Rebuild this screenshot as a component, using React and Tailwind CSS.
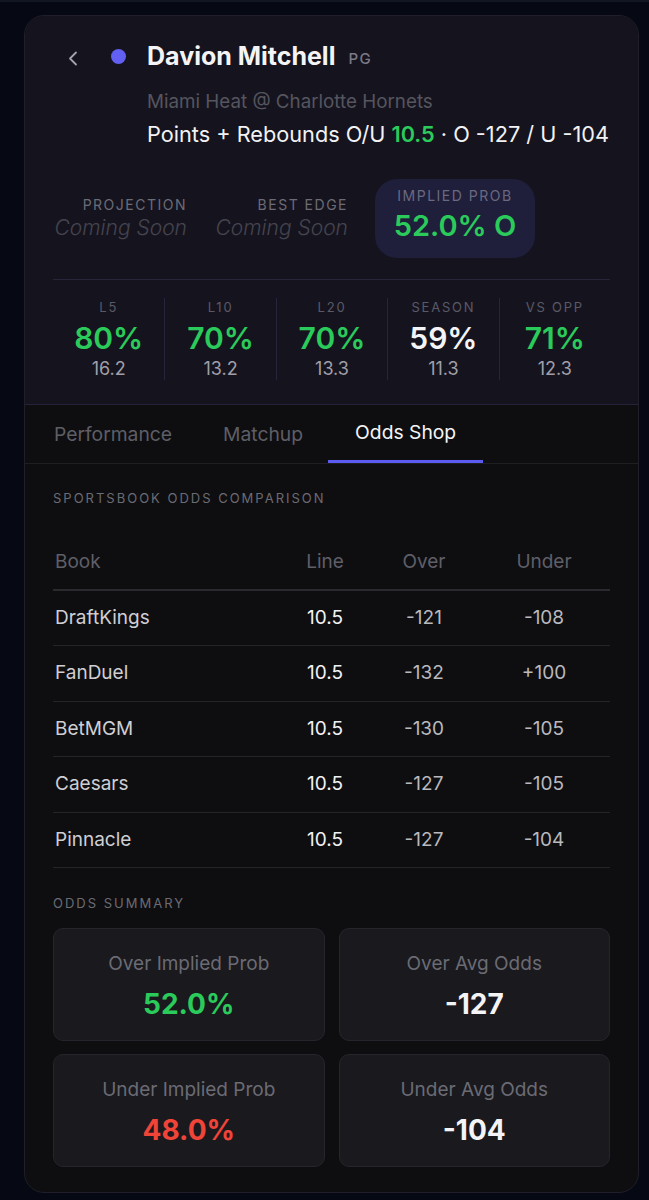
import React from "react";

const F = { fontFamily: "Inter, 'Noto Sans', sans-serif" };

const stats = [
  { l: "L5", p: "80%", v: "16.2", g: true },
  { l: "L10", p: "70%", v: "13.2", g: true },
  { l: "L20", p: "70%", v: "13.3", g: true },
  { l: "SEASON", p: "59%", v: "11.3", g: false },
  { l: "VS OPP", p: "71%", v: "12.3", g: true },
];

const rows = [
  ["DraftKings", "10.5", "-121", "-108"],
  ["FanDuel", "10.5", "-132", "+100"],
  ["BetMGM", "10.5", "-130", "-105"],
  ["Caesars", "10.5", "-127", "-105"],
  ["Pinnacle", "10.5", "-127", "-104"],
];

function SummaryCard({ label, value, color }) {
  return (
    <div className="h-[113px] rounded-[10px] border border-[#25252b] bg-[#19191e] flex flex-col items-center pt-[22px]">
      <div className="text-[19px] leading-[26px] text-[#6b6b74]">{label}</div>
      <div className={`mt-[10px] text-[28px] leading-[34px] font-bold ${color}`}>{value}</div>
    </div>
  );
}

export default function App() {
  return (
    <div className="min-h-screen bg-[#060913] border-t-2 border-[#121622] pt-[13px] pl-[24px]" style={F}>
      <div className="w-[615px] h-[1178px] rounded-[20px] border border-[#1f1e29] overflow-hidden bg-[#0e0e11]">
        {/* Header */}
        <div className="bg-[#15141e] px-[28px] pt-[25px] pb-[24px] border-b border-[#24233a]">
          <div className="flex items-center h-[30px]">
            <svg width="10" height="15" viewBox="0 0 10 15" className="ml-[15px] mt-[4px]">
              <polyline points="8,1.5 2,7.5 8,13.5" fill="none" stroke="#a4a3ad" strokeWidth="1.8" strokeLinecap="round" strokeLinejoin="round" />
            </svg>
            <div className="ml-[33px] w-[15px] h-[15px] rounded-full bg-[#6160f2]" />
            <div className="ml-[21px] text-[25px] leading-[30px] font-bold text-[#f4f4f6]">Davion Mitchell</div>
            <div className="ml-[13px] mt-[6px] text-[15px] font-medium tracking-[1.5px] text-[#7a7986]">PG</div>
          </div>
          <div className="ml-[94px] mt-[19px] text-[18.8px] leading-[24px] text-[#56555f]">Miami Heat @ Charlotte Hornets</div>
          <div className="ml-[94px] mt-[7px] text-[21.7px] leading-[26px] text-[#f2f2f5]">
            Points + Rebounds O/U <span className="text-[#2bcb5b] font-semibold">10.5</span> · O -127 / U -104
          </div>

          <div className="mt-[32px] flex items-center gap-[27px]">
            <div className="w-[134px] text-right">
              <div className="text-[14px] leading-[18px] tracking-[1.5px] text-[#6c6b78]">PROJECTION</div>
              <div className="text-[21px] leading-[28px] font-light italic text-[#45444f]">Coming Soon</div>
            </div>
            <div className="w-[134px] text-right">
              <div className="text-[14px] leading-[18px] tracking-[1.5px] text-[#6c6b78]">BEST EDGE</div>
              <div className="text-[21px] leading-[28px] font-light italic text-[#45444f]">Coming Soon</div>
            </div>
            <div className="w-[160px] h-[79px] rounded-[22px] bg-[#1f1e3b] flex flex-col items-center pt-[7px]">
              <div className="text-[14px] leading-[20px] tracking-[1.5px] text-[#6a6980]">IMPLIED PROB</div>
              <div className="mt-[3px] text-[29px] leading-[34px] font-semibold text-[#2bcb5b]">52.0% O</div>
            </div>
          </div>

          <div className="mt-[21px] h-px bg-[#26253a]" />

          <div className="mt-[18px] grid grid-cols-5">
            {stats.map((s, i) => (
              <div key={s.l} className={`flex flex-col items-center ${i > 0 ? "border-l border-[#26253a]" : ""}`}>
                <div className="text-[13px] leading-[18px] tracking-[1.8px] text-[#5a5967]">{s.l}</div>
                <div className={`mt-[5px] text-[30px] leading-[34px] font-semibold ${s.g ? "text-[#2bcb5b]" : "text-[#f4f4f6]"}`}>{s.p}</div>
                <div className="mt-[3px] text-[18px] leading-[22px] text-[#a09fa8]">{s.v}</div>
              </div>
            ))}
          </div>
        </div>

        {/* Tabs */}
        <div className="flex h-[59px] border-b border-[#1e1e23] pl-[3px]">
          <div className="px-[26px] flex items-center text-[19.3px] text-[#5e5e66]">Performance</div>
          <div className="px-[25px] flex items-center text-[19.3px] text-[#5e5e66]">Matchup</div>
          <div className="flex flex-col text-[19.3px] text-[#f5f5f7]">
            <div className="flex-1 flex items-center px-[27px]">Odds Shop</div>
            <div className="h-[3px] bg-[#5b5bf0]" />
          </div>
        </div>

        {/* Content */}
        <div className="px-[28px] pt-[26px]">
          <div className="text-[13px] leading-[16px] tracking-[2px] text-[#6b6b73]">SPORTSBOOK ODDS COMPARISON</div>

          <div className="mt-[29px]">
            <div className="grid grid-cols-[232px_80px_118px_122px] h-[56px] items-center border-b-2 border-[#2a2a2f] text-[19px] text-[#5f5f68]">
              <div className="pl-[2px]">Book</div>
              <div className="text-center">Line</div>
              <div className="text-center">Over</div>
              <div className="text-center">Under</div>
            </div>
            {rows.map((r) => (
              <div key={r[0]} className="grid grid-cols-[232px_80px_118px_122px] h-[55.4px] items-center border-b border-[#242428] text-[19px]">
                <div className="pl-[2px] text-[#cfcfd3]">{r[0]}</div>
                <div className="text-center text-[#f2f2f4]">{r[1]}</div>
                <div className="text-center text-[#b9b9be]">{r[2]}</div>
                <div className="text-center text-[#b9b9be]">{r[3]}</div>
              </div>
            ))}
          </div>

          <div className="mt-[27px] text-[13px] leading-[16px] tracking-[2px] text-[#6b6b73]">ODDS SUMMARY</div>
          <div className="mt-[17px] grid grid-cols-2 gap-x-[14px] gap-y-[13px]">
            <SummaryCard label="Over Implied Prob" value="52.0%" color="text-[#2bcb5b]" />
            <SummaryCard label="Over Avg Odds" value="-127" color="text-[#f4f4f6]" />
            <SummaryCard label="Under Implied Prob" value="48.0%" color="text-[#f04438]" />
            <SummaryCard label="Under Avg Odds" value="-104" color="text-[#f4f4f6]" />
          </div>
        </div>
      </div>
    </div>
  );
}
